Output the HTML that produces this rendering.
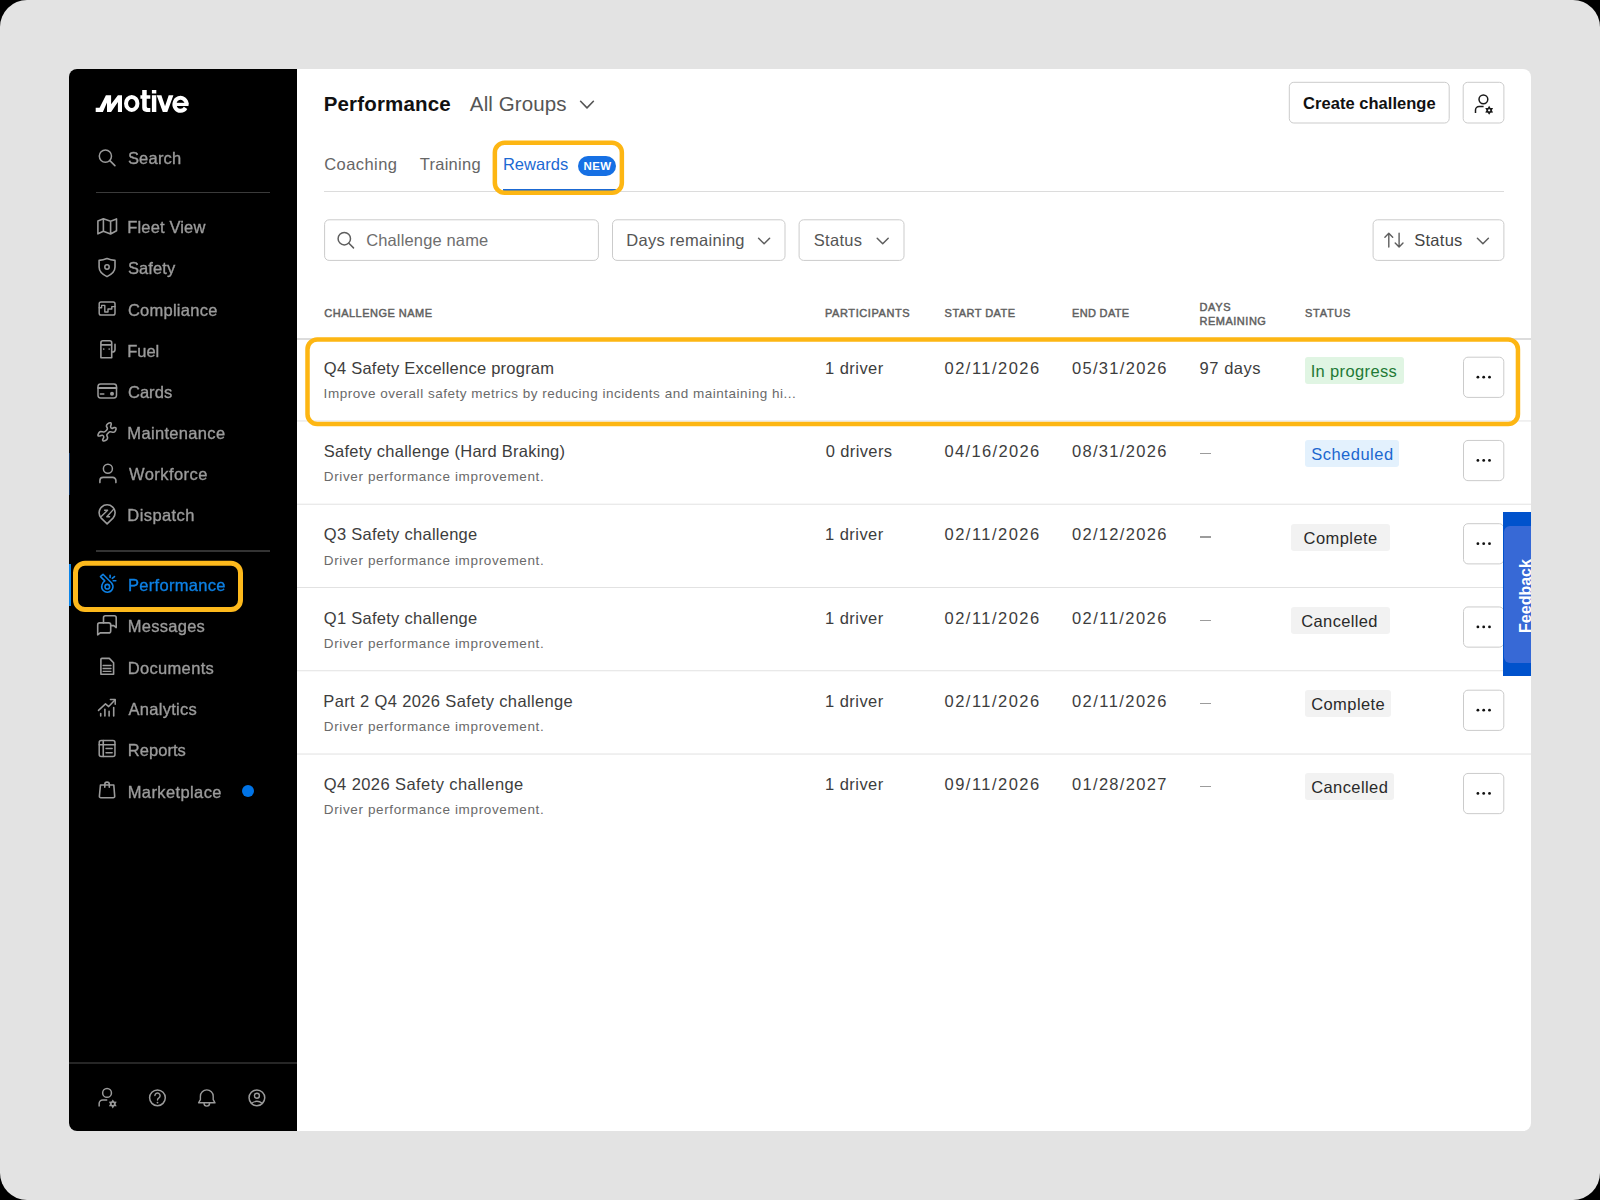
<!DOCTYPE html>
<html><head><meta charset="utf-8"><title>Performance - Rewards</title>
<style>
html,body{margin:0;padding:0;background:#000;}
body{width:1600px;height:1200px;position:relative;overflow:hidden;font-family:"Liberation Sans",sans-serif;}
.frame{position:absolute;left:0;top:0;width:1600px;height:1200px;background:#e3e3e3;border-radius:27px;}
.win{position:absolute;left:69px;top:69px;width:1462px;height:1062px;background:#fff;border-radius:8px;overflow:hidden;}
.side{position:absolute;left:69px;top:69px;width:228px;height:1062px;background:#000;border-radius:8px 0 0 8px;}
.t{position:absolute;white-space:nowrap;line-height:1;font-family:"Liberation Sans",sans-serif;}
.hl{position:absolute;left:297px;width:1234px;height:1px;background:#e4e4e4;}
.btn{position:absolute;box-sizing:border-box;border:1px solid #c9c9c9;border-radius:5px;background:#fff;}
.bd{position:absolute;border-radius:3px;}
.dot{position:absolute;width:2.4px;height:2.4px;border-radius:50%;background:#111;}
.hi{position:absolute;box-sizing:border-box;border:4px solid #fdb613;border-radius:12px;}
.sdiv{position:absolute;background:#333;}
svg{position:absolute;left:0;top:0;overflow:visible;}
</style></head><body>
<div class="frame"></div>
<div class="win"></div>
<div class="side"></div>
<!-- sidebar dividers -->
<div class="sdiv" style="left:96px;top:192px;width:174px;height:1px;background:#3a3a3a"></div>
<div class="sdiv" style="left:96px;top:550px;width:174px;height:2px;background:#333"></div>
<div class="sdiv" style="left:69px;top:1062px;width:228px;height:2px;background:#262626"></div>
<div style="position:absolute;left:69px;top:564px;width:2px;height:42px;background:#0a84e8"></div>
<div style="position:absolute;left:69px;top:453px;width:1px;height:42px;background:#0a2f5e"></div>
<div style="position:absolute;left:242px;top:785.3px;width:12px;height:12px;border-radius:50%;background:#0073e6"></div>
<!-- logo -->
<svg width="1600" height="1200" viewBox="0 0 1600 1200">
<path fill="#fff" d="M95.7 112 V107.8 H99.6 L105.9 95.2 H111.1 V104.2 L117.9 95.2 H122 V112 H117.9 V101.9 L111.1 112 H107 V102.4 L102.9 112 Z"/>
<ellipse cx="131.75" cy="103.45" rx="5.7" ry="6.45" fill="none" stroke="#fff" stroke-width="4"/>
<path fill="#fff" d="M142.2 90 H146.7 V95.2 H150.3 V98.8 H146.7 V106.4 Q146.7 108.1 148.4 108.1 H150.3 V111.9 H146.6 Q142.2 111.9 142.2 107.5 V98.8 H140.4 V95.2 H142.2 Z"/>
<path fill="#fff" d="M151.9 90 H156.3 V93.6 H151.9 Z M151.9 95.2 H156.3 V111.9 H151.9 Z"/>
<path fill="#fff" d="M156.7 95.2 H161.4 L165.05 106.3 L168.7 95.2 H173.4 L167.3 111.9 H162.8 Z"/>
<path fill="none" stroke="#fff" stroke-width="4" d="M186.6 104.4 A6.1 6.5 0 1 0 185.6 107.9"/>
<path fill="none" stroke="#fff" stroke-width="3.2" d="M174.6 104.4 H188.5"/>
<circle cx="105.4" cy="156.1" r="6.1" fill="none" stroke="#9b9b9b" stroke-width="1.5"/>
<path d="M109.9 160.6 L114.9 165.6" fill="none" stroke="#9b9b9b" stroke-width="1.6" stroke-linecap="round" stroke-linejoin="round" />
<path d="M97.9 221 L103.4 218.8 L110.6 221.2 L116.5 218.9 V230.8 L110.6 234 L103.4 231.2 L97.9 233.8 Z M103.4 218.8 V231.2 M110.6 221.2 V234" fill="none" stroke="#9b9b9b" stroke-width="1.6" stroke-linecap="round" stroke-linejoin="round" />
<path d="M99.1 260.4 Q103.2 260.3 107 258.6 Q110.8 260.3 115 260.4 V267 C115 271.6 111.6 274.4 107 276.6 C102.4 274.4 99.1 271.6 99.1 267 Z" fill="none" stroke="#9b9b9b" stroke-width="1.6" stroke-linecap="round" stroke-linejoin="round" />
<circle cx="107" cy="267" r="2.2" fill="none" stroke="#9b9b9b" stroke-width="1.5"/>
<rect x="99.2" y="302" width="15.8" height="13" rx="1.8" fill="none" stroke="#9b9b9b" stroke-width="1.5"/>
<path d="M99.2 307.8 H101.6 V305.4 H104.8 V312 H108 V309 H111.8 V306.6 H115" fill="none" stroke="#9b9b9b" stroke-width="1.4" stroke-linecap="round" stroke-linejoin="round" />
<path d="M100.9 357.8 V342.7 a2 2 0 0 1 2 -2 H109.7 a2 2 0 0 1 2 2 V357.8 Z M100.9 344.9 H111.7" fill="none" stroke="#9b9b9b" stroke-width="1.6" stroke-linecap="round" stroke-linejoin="round" />
<path d="M111.7 352 H112.4 a2.6 2.6 0 0 0 2.6 -2.6 V344.4" fill="none" stroke="#9b9b9b" stroke-width="1.6" stroke-linecap="round" stroke-linejoin="round" />
<circle cx="103.7" cy="349" r="0.85" fill="#9b9b9b"/><circle cx="109.2" cy="349" r="0.85" fill="#9b9b9b"/>
<rect x="98" y="383.9" width="18.5" height="14" rx="2.6" fill="none" stroke="#9b9b9b" stroke-width="1.5"/>
<path d="M98 388 H116.5" fill="none" stroke="#9b9b9b" stroke-width="1.8" stroke-linecap="round" stroke-linejoin="round" />
<path d="M100.4 393.9 H103.8" fill="none" stroke="#9b9b9b" stroke-width="1.5" stroke-linecap="round" stroke-linejoin="round" />
<circle cx="112" cy="393.8" r="2" fill="#9b9b9b"/>
<path d="M110.80 422.80 C110.20 422.70 108.33 423.27 107.60 423.80 C106.87 424.33 106.43 425.20 106.40 426.00 C106.37 426.80 107.47 427.80 107.40 428.60 C107.33 429.40 106.57 430.23 106.00 430.80 C105.43 431.37 104.90 431.87 104.00 432.00 C103.10 432.13 101.47 431.43 100.60 431.60 C99.73 431.77 99.23 432.33 98.80 433.00 C98.37 433.67 97.80 435.10 98.00 435.60 C98.20 436.10 99.27 436.07 100.00 436.00 C100.73 435.93 101.77 435.03 102.40 435.20 C103.03 435.37 103.77 436.20 103.80 437.00 C103.83 437.80 102.57 439.33 102.60 440.00 C102.63 440.67 103.30 441.07 104.00 441.00 C104.70 440.93 106.20 440.17 106.80 439.60 C107.40 439.03 107.60 438.40 107.60 437.60 C107.60 436.80 106.67 435.60 106.80 434.80 C106.93 434.00 107.87 433.30 108.40 432.80 C108.93 432.30 109.13 431.90 110.00 431.80 C110.87 431.70 112.70 432.37 113.60 432.20 C114.50 432.03 115.00 431.50 115.40 430.80 C115.80 430.10 116.23 428.53 116.00 428.00 C115.77 427.47 114.67 427.53 114.00 427.60 C113.33 427.67 112.57 428.53 112.00 428.40 C111.43 428.27 110.73 427.47 110.60 426.80 C110.47 426.13 111.17 425.07 111.20 424.40 C111.23 423.73 111.40 422.90 110.80 422.80Z" fill="none" stroke="#9b9b9b" stroke-width="1.6" stroke-linecap="round" stroke-linejoin="round" />
<circle cx="107.9" cy="468.7" r="4.5" fill="none" stroke="#9b9b9b" stroke-width="1.5"/>
<path d="M99.9 482.6 V480.6 a3.2 3.2 0 0 1 3.2 -3.2 H112.7 a3.2 3.2 0 0 1 3.2 3.2 V482.6" fill="none" stroke="#9b9b9b" stroke-width="1.6" stroke-linecap="round" stroke-linejoin="round" />
<path d="M107.1 523.8 L101.2 518.2 A8 8 0 1 1 113 518.2 Z" fill="none" stroke="#9b9b9b" stroke-width="1.6" stroke-linecap="round" stroke-linejoin="round" />
<path d="M101.5 516.3 L107.6 510.3 H104.6 M113.5 509.4 L106.8 516.7 H109.6" fill="none" stroke="#9b9b9b" stroke-width="1.4" stroke-linecap="round" stroke-linejoin="round" />
<path d="M103 574.3 L111.6 583 A5.6 5.6 0 1 1 101.9 585.2 C102.2 583.5 103.2 582 104.8 580.9 L100.5 576.6 Z" fill="none" stroke="#0d80e4" stroke-width="1.6" stroke-linecap="round" stroke-linejoin="round" />
<circle cx="107.3" cy="586.7" r="2.3" fill="none" stroke="#0d80e4" stroke-width="1.6"/>
<path d="M110.1 575.3 V577.4 M112.3 578.3 L114.5 576.6 M113.2 580.8 H115.8" fill="none" stroke="#0d80e4" stroke-width="1.6" stroke-linecap="round" stroke-linejoin="round" />
<path d="M103.5 622.9 V617.8 a2 2 0 0 1 2 -2 H114.2 a2 2 0 0 1 2 2 V627.6 L113.8 625.6 H110.7" fill="none" stroke="#9b9b9b" stroke-width="1.6" stroke-linecap="round" stroke-linejoin="round" />
<path d="M97.7 634.8 V624.9 a2 2 0 0 1 2 -2 H108.7 a2 2 0 0 1 2 2 V630.9 a2 2 0 0 1 -2 2 H100.2 Z" fill="none" stroke="#9b9b9b" stroke-width="1.6" stroke-linecap="round" stroke-linejoin="round" />
<path d="M100.9 674.3 V659.4 a1 1 0 0 1 1 -1 H109.3 L113.6 662.7 V674.3 Z" fill="none" stroke="#9b9b9b" stroke-width="1.6" stroke-linecap="round" stroke-linejoin="round" />
<path d="M103.1 665.5 H111 M103.1 668.5 H111 M103.1 671.3 H111" fill="none" stroke="#9b9b9b" stroke-width="1.3" stroke-linecap="round" stroke-linejoin="round" />
<path d="M98.5 710.4 L105.5 703.9 L108.7 706.6 L114.9 700" fill="none" stroke="#9b9b9b" stroke-width="1.5" stroke-linecap="round" stroke-linejoin="round" />
<path d="M110.4 699.6 H115.2 V704.2" fill="none" stroke="#9b9b9b" stroke-width="1.5" stroke-linecap="round" stroke-linejoin="round" />
<path d="M100.7 713.6 V716 M104.9 709.2 V716 M109.1 711.2 V716 M113.7 707.6 V716" fill="none" stroke="#9b9b9b" stroke-width="1.6" stroke-linecap="round" stroke-linejoin="round" />
<rect x="99.2" y="740.6" width="15.75" height="15.8" rx="2" fill="none" stroke="#9b9b9b" stroke-width="1.5"/>
<path d="M103.25 740.6 V756.4 M99.2 744.7 H114.95" fill="none" stroke="#9b9b9b" stroke-width="1.6" stroke-linecap="round" stroke-linejoin="round" />
<path d="M106 748.5 H112.2 M106 752.7 H112.2" fill="none" stroke="#9b9b9b" stroke-width="1.4" stroke-linecap="round" stroke-linejoin="round" />
<path d="M100.45 785 H113.8 L114.7 796.2 a1.4 1.4 0 0 1 -1.4 1.5 H100.8 a1.4 1.4 0 0 1 -1.4 -1.5 Z" fill="none" stroke="#9b9b9b" stroke-width="1.6" stroke-linecap="round" stroke-linejoin="round" />
<path d="M104.8 787.2 V784.4 a2.25 2.25 0 0 1 4.5 0 V787.2" fill="none" stroke="#9b9b9b" stroke-width="1.6" stroke-linecap="round" stroke-linejoin="round" />
<circle cx="107.05" cy="1092.90" r="4.4" fill="none" stroke="#9b9b9b" stroke-width="1.5"/><path d="M99.15 1106.50 V1103.60 a3.6 3.6 0 0 1 3.6 -3.6 H107.25" fill="none" stroke="#9b9b9b" stroke-width="1.5"/><path d="M112.80 1099.40 L114.15 1101.56 L116.70 1101.65 L115.50 1103.90 L116.70 1106.15 L114.15 1106.24 L112.80 1108.40 L111.45 1106.24 L108.90 1106.15 L110.10 1103.90 L108.90 1101.65 L111.45 1101.56Z M111.65 1103.90 a1.15 1.15 0 1 0 2.3 0 a1.15 1.15 0 1 0 -2.3 0Z" fill="#9b9b9b" fill-rule="evenodd" stroke="none"/>
<circle cx="157.45" cy="1097.85" r="7.85" fill="none" stroke="#9b9b9b" stroke-width="1.5"/>
<path d="M154.9 1095.6 a2.6 2.6 0 1 1 4 2.2 c-1 0.6 -1.4 1.1 -1.4 2.2" fill="none" stroke="#9b9b9b" stroke-width="1.4" stroke-linecap="round" stroke-linejoin="round" />
<circle cx="157.5" cy="1102.6" r="0.9" fill="#9b9b9b"/>
<path d="M198.6 1102.8 L200.4 1099.6 V1096.3 a6.4 6.4 0 0 1 12.8 0 V1099.6 L215 1102.8 Z M204 1103.3 a2.8 2.8 0 0 0 5.6 0" fill="none" stroke="#9b9b9b" stroke-width="1.4" stroke-linecap="round" stroke-linejoin="round" />
<circle cx="256.9" cy="1097.85" r="7.85" fill="none" stroke="#9b9b9b" stroke-width="1.5"/>
<circle cx="256.9" cy="1095.7" r="2.5" fill="none" stroke="#9b9b9b" stroke-width="1.4"/>
<path d="M251.5 1103.2 Q256.9 1099.4 262.3 1103.2" fill="none" stroke="#9b9b9b" stroke-width="1.4" stroke-linecap="round" stroke-linejoin="round" />
</svg>
<!-- main chrome -->
<div style="position:absolute;left:324px;top:191px;width:1180px;height:1px;background:#dcdcdc"></div>
<div style="position:absolute;left:503px;top:189px;width:113px;height:2.5px;background:#1b69d3"></div>
<div style="position:absolute;left:577.6px;top:155.6px;width:38.6px;height:20px;border-radius:10px;background:#1670e4"></div>
<div class="hl" style="top:338px;height:2px;background:#dcdcdc"></div>
<svg width="1600" height="1200" viewBox="0 0 1600 1200">
<rect x="297" y="420.45" width="1234" height="1" fill="#e2e2e2"/>
<rect x="297" y="503.72" width="1234" height="1" fill="#e2e2e2"/>
<rect x="297" y="586.99" width="1234" height="1" fill="#e2e2e2"/>
<rect x="297" y="670.26" width="1234" height="1" fill="#e2e2e2"/>
<rect x="297" y="753.53" width="1234" height="1" fill="#e2e2e2"/>
</svg>
<div class="bd" style="left:1305.0px;top:357.0px;width:99.0px;height:27px;background:#e0f5e3"></div>
<div class="bd" style="left:1305.0px;top:440.2px;width:94.0px;height:27px;background:#e3f1fd"></div>
<div class="bd" style="left:1291.3px;top:523.5px;width:99.2px;height:27px;background:#f2f2f2"></div>
<div class="bd" style="left:1291.3px;top:606.8px;width:99.2px;height:27px;background:#f2f2f2"></div>
<div class="bd" style="left:1305.0px;top:690.0px;width:85.5px;height:27px;background:#f2f2f2"></div>
<div class="bd" style="left:1305.0px;top:773.2px;width:88.5px;height:27px;background:#f2f2f2"></div>
<div style="position:absolute;left:1200px;top:453.1px;width:11px;height:1.4px;background:#9c9c9c"></div>
<div style="position:absolute;left:1200px;top:536.3px;width:11px;height:1.4px;background:#9c9c9c"></div>
<div style="position:absolute;left:1200px;top:619.5px;width:11px;height:1.4px;background:#9c9c9c"></div>
<div style="position:absolute;left:1200px;top:702.8px;width:11px;height:1.4px;background:#9c9c9c"></div>
<div style="position:absolute;left:1200px;top:786.0px;width:11px;height:1.4px;background:#9c9c9c"></div>
<svg width="1600" height="1200" viewBox="0 0 1600 1200">
<rect x="1289.30" y="82.30" width="159.90" height="40.70" rx="4.5" fill="#fff" stroke="#cbcbcb" stroke-width="1"/>
<rect x="1463.20" y="82.30" width="40.70" height="40.70" rx="4.5" fill="#fff" stroke="#cbcbcb" stroke-width="1"/>
<rect x="324.60" y="219.80" width="273.80" height="40.60" rx="4.5" fill="#fff" stroke="#cbcbcb" stroke-width="1"/>
<rect x="612.50" y="219.80" width="172.50" height="40.60" rx="4.5" fill="#fff" stroke="#cbcbcb" stroke-width="1"/>
<rect x="799.10" y="219.80" width="104.90" height="40.60" rx="4.5" fill="#fff" stroke="#cbcbcb" stroke-width="1"/>
<rect x="1373.10" y="219.80" width="130.80" height="40.60" rx="4.5" fill="#fff" stroke="#cbcbcb" stroke-width="1"/>
<rect x="1463.50" y="357.20" width="40.30" height="40.20" rx="4.5" fill="#fff" stroke="#cbcbcb" stroke-width="1"/>
<rect x="1463.50" y="440.45" width="40.30" height="40.20" rx="4.5" fill="#fff" stroke="#cbcbcb" stroke-width="1"/>
<rect x="1463.50" y="523.70" width="40.30" height="40.20" rx="4.5" fill="#fff" stroke="#cbcbcb" stroke-width="1"/>
<rect x="1463.50" y="606.95" width="40.30" height="40.20" rx="4.5" fill="#fff" stroke="#cbcbcb" stroke-width="1"/>
<rect x="1463.50" y="690.20" width="40.30" height="40.20" rx="4.5" fill="#fff" stroke="#cbcbcb" stroke-width="1"/>
<rect x="1463.50" y="773.45" width="40.30" height="40.20" rx="4.5" fill="#fff" stroke="#cbcbcb" stroke-width="1"/>
<path d="M580.6 101.3 L587 107.9 L593.4 101.3" fill="none" stroke="#555" stroke-width="1.6" stroke-linecap="round" stroke-linejoin="round"/>
<circle cx="344.3" cy="238.7" r="6.2" fill="none" stroke="#5e5e5e" stroke-width="1.5"/>
<path d="M348.9 243.3 L353.5 247.9" fill="none" stroke="#5e5e5e" stroke-width="1.5" stroke-linecap="round" stroke-linejoin="round"/>
<path d="M758.6 238.2 L764.1 243.8 L769.6 238.2" fill="none" stroke="#5e5e5e" stroke-width="1.5" stroke-linecap="round" stroke-linejoin="round"/>
<path d="M877.2 238.2 L882.7 243.8 L888.2 238.2" fill="none" stroke="#5e5e5e" stroke-width="1.5" stroke-linecap="round" stroke-linejoin="round"/>
<path d="M1477.4 238.2 L1482.9 243.8 L1488.4 238.2" fill="none" stroke="#5e5e5e" stroke-width="1.5" stroke-linecap="round" stroke-linejoin="round"/>
<path d="M1388.8 247 V233.4 M1384.9 237.3 L1388.8 233.3 L1392.7 237.3" fill="none" stroke="#5e5e5e" stroke-width="1.4" stroke-linecap="round" stroke-linejoin="round"/>
<path d="M1399.1 233.3 V246.9 M1395.2 243 L1399.1 247 L1403 243" fill="none" stroke="#5e5e5e" stroke-width="1.4" stroke-linecap="round" stroke-linejoin="round"/>
<circle cx="1477.90" cy="377.20" r="1.4" fill="#111"/>
<circle cx="1483.70" cy="377.20" r="1.4" fill="#111"/>
<circle cx="1489.50" cy="377.20" r="1.4" fill="#111"/>
<circle cx="1477.90" cy="460.45" r="1.4" fill="#111"/>
<circle cx="1483.70" cy="460.45" r="1.4" fill="#111"/>
<circle cx="1489.50" cy="460.45" r="1.4" fill="#111"/>
<circle cx="1477.90" cy="543.70" r="1.4" fill="#111"/>
<circle cx="1483.70" cy="543.70" r="1.4" fill="#111"/>
<circle cx="1489.50" cy="543.70" r="1.4" fill="#111"/>
<circle cx="1477.90" cy="626.95" r="1.4" fill="#111"/>
<circle cx="1483.70" cy="626.95" r="1.4" fill="#111"/>
<circle cx="1489.50" cy="626.95" r="1.4" fill="#111"/>
<circle cx="1477.90" cy="710.20" r="1.4" fill="#111"/>
<circle cx="1483.70" cy="710.20" r="1.4" fill="#111"/>
<circle cx="1489.50" cy="710.20" r="1.4" fill="#111"/>
<circle cx="1477.90" cy="793.45" r="1.4" fill="#111"/>
<circle cx="1483.70" cy="793.45" r="1.4" fill="#111"/>
<circle cx="1489.50" cy="793.45" r="1.4" fill="#111"/>
<circle cx="1483.40" cy="99.30" r="4.4" fill="none" stroke="#1a1a1a" stroke-width="1.5"/><path d="M1475.50 112.90 V110.00 a3.6 3.6 0 0 1 3.6 -3.6 H1483.60" fill="none" stroke="#1a1a1a" stroke-width="1.5"/><path d="M1489.15 105.80 L1490.50 107.96 L1493.05 108.05 L1491.85 110.30 L1493.05 112.55 L1490.50 112.64 L1489.15 114.80 L1487.80 112.64 L1485.25 112.55 L1486.45 110.30 L1485.25 108.05 L1487.80 107.96Z M1488.00 110.30 a1.15 1.15 0 1 0 2.3 0 a1.15 1.15 0 1 0 -2.3 0Z" fill="#1a1a1a" fill-rule="evenodd" stroke="none"/>
</svg>
<div style="position:absolute;left:0;top:0;width:300px;height:1200px;will-change:transform">
<div id="n_search" class="t" style="left:127.91px;top:150.00px;font-size:16.5px;font-weight:400;color:#9b9b9b;letter-spacing:0.208px;-webkit-text-stroke:0.35px #9b9b9b;">Search</div>
<div id="n_a0" class="t" style="left:127.35px;top:219.01px;font-size:16.5px;font-weight:400;color:#9b9b9b;letter-spacing:0.139px;-webkit-text-stroke:0.35px #9b9b9b;">Fleet View</div>
<div id="n_a1" class="t" style="left:127.91px;top:260.00px;font-size:16.5px;font-weight:400;color:#9b9b9b;letter-spacing:0.121px;-webkit-text-stroke:0.35px #9b9b9b;">Safety</div>
<div id="n_a2" class="t" style="left:127.91px;top:302.00px;font-size:16.5px;font-weight:400;color:#9b9b9b;letter-spacing:0.253px;-webkit-text-stroke:0.35px #9b9b9b;">Compliance</div>
<div id="n_a3" class="t" style="left:127.35px;top:343.01px;font-size:16.5px;font-weight:400;color:#9b9b9b;letter-spacing:-0.054px;-webkit-text-stroke:0.35px #9b9b9b;">Fuel</div>
<div id="n_a4" class="t" style="left:127.91px;top:384.00px;font-size:16.5px;font-weight:400;color:#9b9b9b;letter-spacing:0.059px;-webkit-text-stroke:0.35px #9b9b9b;">Cards</div>
<div id="n_a5" class="t" style="left:127.35px;top:425.00px;font-size:16.5px;font-weight:400;color:#9b9b9b;letter-spacing:0.328px;-webkit-text-stroke:0.35px #9b9b9b;">Maintenance</div>
<div id="n_a6" class="t" style="left:129.00px;top:466.01px;font-size:16.5px;font-weight:400;color:#9b9b9b;letter-spacing:0.432px;-webkit-text-stroke:0.35px #9b9b9b;">Workforce</div>
<div id="n_a7" class="t" style="left:127.35px;top:507.00px;font-size:16.5px;font-weight:400;color:#9b9b9b;letter-spacing:0.409px;-webkit-text-stroke:0.35px #9b9b9b;">Dispatch</div>
<div id="n_perf" class="t" style="left:127.98px;top:577.00px;font-size:16.5px;font-weight:400;color:#0d80e4;letter-spacing:0.305px;-webkit-text-stroke:0.35px #0d80e4;">Performance</div>
<div id="n_b0" class="t" style="left:127.73px;top:618.00px;font-size:16.5px;font-weight:400;color:#9b9b9b;letter-spacing:0.274px;-webkit-text-stroke:0.35px #9b9b9b;">Messages</div>
<div id="n_b1" class="t" style="left:127.73px;top:660.00px;font-size:16.5px;font-weight:400;color:#9b9b9b;letter-spacing:0.328px;-webkit-text-stroke:0.35px #9b9b9b;">Documents</div>
<div id="n_b2" class="t" style="left:128.59px;top:701.00px;font-size:16.5px;font-weight:400;color:#9b9b9b;letter-spacing:0.271px;-webkit-text-stroke:0.35px #9b9b9b;">Analytics</div>
<div id="n_b3" class="t" style="left:127.73px;top:742.00px;font-size:16.5px;font-weight:400;color:#9b9b9b;letter-spacing:0.053px;-webkit-text-stroke:0.35px #9b9b9b;">Reports</div>
<div id="n_b4" class="t" style="left:127.73px;top:784.00px;font-size:16.5px;font-weight:400;color:#9b9b9b;letter-spacing:0.387px;-webkit-text-stroke:0.35px #9b9b9b;">Marketplace</div>
</div>
<div id="h_title" class="t" style="left:323.70px;top:94.01px;font-size:20.5px;font-weight:700;color:#111;letter-spacing:0.172px;">Performance</div>
<div id="h_groups" class="t" style="left:469.85px;top:94.01px;font-size:20.5px;font-weight:400;color:#555;letter-spacing:0.119px;">All Groups</div>
<div id="b_create" class="t" style="left:1303.10px;top:95.01px;font-size:16.5px;font-weight:700;color:#111;letter-spacing:0.031px;">Create challenge</div>
<div id="tab_c" class="t" style="left:324.14px;top:156.00px;font-size:16.5px;font-weight:400;color:#666;letter-spacing:0.458px;">Coaching</div>
<div id="tab_t" class="t" style="left:419.69px;top:156.00px;font-size:16.5px;font-weight:400;color:#666;letter-spacing:0.277px;">Training</div>
<div id="tab_r" class="t" style="left:502.90px;top:156.00px;font-size:16.5px;font-weight:400;color:#1b69d3;letter-spacing:0.061px;">Rewards</div>
<div id="new" class="t" style="left:583.40px;top:160.57px;font-size:11.5px;font-weight:700;color:#fff;letter-spacing:0.450px;">NEW</div>
<div id="f_ph" class="t" style="left:366.14px;top:232.00px;font-size:16.5px;font-weight:400;color:#6e6e6e;letter-spacing:0.151px;">Challenge name</div>
<div id="f_days" class="t" style="left:626.27px;top:232.00px;font-size:16.5px;font-weight:400;color:#555;letter-spacing:0.280px;">Days remaining</div>
<div id="f_status" class="t" style="left:813.67px;top:232.00px;font-size:16.5px;font-weight:400;color:#555;letter-spacing:0.333px;">Status</div>
<div id="f_sort" class="t" style="left:1414.26px;top:232.00px;font-size:16.5px;font-weight:400;color:#444;letter-spacing:0.259px;">Status</div>
<div id="th_name" class="t" style="left:324.32px;top:308.01px;font-size:11px;font-weight:400;color:#606060;letter-spacing:0.485px;-webkit-text-stroke:0.45px #606060;">CHALLENGE NAME</div>
<div id="th_part" class="t" style="left:825.00px;top:308.01px;font-size:11px;font-weight:400;color:#606060;letter-spacing:0.587px;-webkit-text-stroke:0.45px #606060;">PARTICIPANTS</div>
<div id="th_start" class="t" style="left:944.60px;top:308.01px;font-size:11px;font-weight:400;color:#606060;letter-spacing:0.448px;-webkit-text-stroke:0.45px #606060;">START DATE</div>
<div id="th_end" class="t" style="left:1071.98px;top:308.01px;font-size:11px;font-weight:400;color:#606060;letter-spacing:0.339px;-webkit-text-stroke:0.45px #606060;">END DATE</div>
<div id="th_days" class="t" style="left:1199.47px;top:302.00px;font-size:11px;font-weight:400;color:#606060;letter-spacing:0.668px;-webkit-text-stroke:0.45px #606060;">DAYS</div>
<div id="th_rem" class="t" style="left:1199.47px;top:316.01px;font-size:11px;font-weight:400;color:#606060;letter-spacing:0.513px;-webkit-text-stroke:0.45px #606060;">REMAINING</div>
<div id="th_status" class="t" style="left:1305.08px;top:308.01px;font-size:11px;font-weight:400;color:#606060;letter-spacing:0.702px;-webkit-text-stroke:0.45px #606060;">STATUS</div>
<div id="r0_t" class="t" style="left:323.87px;top:360.00px;font-size:16.5px;font-weight:400;color:#3d3d3d;letter-spacing:0.237px;">Q4 Safety Excellence program</div>
<div id="r0_d" class="t" style="left:323.61px;top:387.01px;font-size:13.5px;font-weight:400;color:#6a6a6a;letter-spacing:0.517px;">Improve overall safety metrics by reducing incidents and maintaining hi...</div>
<div id="r0_p" class="t" style="left:825.10px;top:360.00px;font-size:16.5px;font-weight:400;color:#3d3d3d;letter-spacing:0.446px;">1 driver</div>
<div id="r0_s" class="t" style="left:944.55px;top:360.00px;font-size:16.5px;font-weight:400;color:#3d3d3d;letter-spacing:1.467px;">02/11/2026</div>
<div id="r0_e" class="t" style="left:1072.00px;top:360.00px;font-size:16.5px;font-weight:400;color:#3d3d3d;letter-spacing:1.312px;">05/31/2026</div>
<div id="r0_n" class="t" style="left:1199.58px;top:360.00px;font-size:16.5px;font-weight:400;color:#3d3d3d;letter-spacing:0.540px;">97 days</div>
<div id="r1_t" class="t" style="left:323.75px;top:443.00px;font-size:16.5px;font-weight:400;color:#3d3d3d;letter-spacing:0.247px;">Safety challenge (Hard Braking)</div>
<div id="r1_d" class="t" style="left:323.80px;top:470.01px;font-size:13.5px;font-weight:400;color:#6a6a6a;letter-spacing:0.627px;">Driver performance improvement.</div>
<div id="r1_p" class="t" style="left:825.81px;top:443.00px;font-size:16.5px;font-weight:400;color:#3d3d3d;letter-spacing:0.370px;">0 drivers</div>
<div id="r1_s" class="t" style="left:944.55px;top:443.00px;font-size:16.5px;font-weight:400;color:#3d3d3d;letter-spacing:1.333px;">04/16/2026</div>
<div id="r1_e" class="t" style="left:1072.00px;top:443.00px;font-size:16.5px;font-weight:400;color:#3d3d3d;letter-spacing:1.312px;">08/31/2026</div>
<div id="r2_t" class="t" style="left:323.87px;top:526.00px;font-size:16.5px;font-weight:400;color:#3d3d3d;letter-spacing:0.266px;">Q3 Safety challenge</div>
<div id="r2_d" class="t" style="left:323.80px;top:554.01px;font-size:13.5px;font-weight:400;color:#6a6a6a;letter-spacing:0.627px;">Driver performance improvement.</div>
<div id="r2_p" class="t" style="left:825.10px;top:526.00px;font-size:16.5px;font-weight:400;color:#3d3d3d;letter-spacing:0.446px;">1 driver</div>
<div id="r2_s" class="t" style="left:944.55px;top:526.00px;font-size:16.5px;font-weight:400;color:#3d3d3d;letter-spacing:1.467px;">02/11/2026</div>
<div id="r2_e" class="t" style="left:1072.00px;top:526.00px;font-size:16.5px;font-weight:400;color:#3d3d3d;letter-spacing:1.312px;">02/12/2026</div>
<div id="r3_t" class="t" style="left:323.87px;top:610.00px;font-size:16.5px;font-weight:400;color:#3d3d3d;letter-spacing:0.266px;">Q1 Safety challenge</div>
<div id="r3_d" class="t" style="left:323.80px;top:637.01px;font-size:13.5px;font-weight:400;color:#6a6a6a;letter-spacing:0.627px;">Driver performance improvement.</div>
<div id="r3_p" class="t" style="left:825.10px;top:610.00px;font-size:16.5px;font-weight:400;color:#3d3d3d;letter-spacing:0.446px;">1 driver</div>
<div id="r3_s" class="t" style="left:944.55px;top:610.00px;font-size:16.5px;font-weight:400;color:#3d3d3d;letter-spacing:1.467px;">02/11/2026</div>
<div id="r3_e" class="t" style="left:1072.00px;top:610.00px;font-size:16.5px;font-weight:400;color:#3d3d3d;letter-spacing:1.444px;">02/11/2026</div>
<div id="r4_t" class="t" style="left:323.31px;top:693.00px;font-size:16.5px;font-weight:400;color:#3d3d3d;letter-spacing:0.367px;">Part 2 Q4 2026 Safety challenge</div>
<div id="r4_d" class="t" style="left:323.80px;top:720.01px;font-size:13.5px;font-weight:400;color:#6a6a6a;letter-spacing:0.627px;">Driver performance improvement.</div>
<div id="r4_p" class="t" style="left:825.10px;top:693.00px;font-size:16.5px;font-weight:400;color:#3d3d3d;letter-spacing:0.446px;">1 driver</div>
<div id="r4_s" class="t" style="left:944.55px;top:693.00px;font-size:16.5px;font-weight:400;color:#3d3d3d;letter-spacing:1.467px;">02/11/2026</div>
<div id="r4_e" class="t" style="left:1072.00px;top:693.00px;font-size:16.5px;font-weight:400;color:#3d3d3d;letter-spacing:1.444px;">02/11/2026</div>
<div id="r5_t" class="t" style="left:323.87px;top:776.00px;font-size:16.5px;font-weight:400;color:#3d3d3d;letter-spacing:0.413px;">Q4 2026 Safety challenge</div>
<div id="r5_d" class="t" style="left:323.80px;top:803.01px;font-size:13.5px;font-weight:400;color:#6a6a6a;letter-spacing:0.627px;">Driver performance improvement.</div>
<div id="r5_p" class="t" style="left:825.10px;top:776.00px;font-size:16.5px;font-weight:400;color:#3d3d3d;letter-spacing:0.446px;">1 driver</div>
<div id="r5_s" class="t" style="left:944.55px;top:776.00px;font-size:16.5px;font-weight:400;color:#3d3d3d;letter-spacing:1.467px;">09/11/2026</div>
<div id="r5_e" class="t" style="left:1072.00px;top:776.00px;font-size:16.5px;font-weight:400;color:#3d3d3d;letter-spacing:1.314px;">01/28/2027</div>
<div id="bd0" class="t" style="left:1310.65px;top:363.00px;font-size:16.5px;font-weight:400;color:#1f7a36;letter-spacing:0.361px;">In progress</div>
<div id="bd1" class="t" style="left:1311.19px;top:446.00px;font-size:16.5px;font-weight:400;color:#1b67cf;letter-spacing:0.493px;">Scheduled</div>
<div id="bd2" class="t" style="left:1303.55px;top:530.00px;font-size:16.5px;font-weight:400;color:#2a2a2a;letter-spacing:0.443px;">Complete</div>
<div id="bd3" class="t" style="left:1301.33px;top:613.00px;font-size:16.5px;font-weight:400;color:#2a2a2a;letter-spacing:0.346px;">Cancelled</div>
<div id="bd4" class="t" style="left:1311.17px;top:696.00px;font-size:16.5px;font-weight:400;color:#2a2a2a;letter-spacing:0.429px;">Complete</div>
<div id="bd5" class="t" style="left:1311.17px;top:779.00px;font-size:16.5px;font-weight:400;color:#2a2a2a;letter-spacing:0.410px;">Cancelled</div>
<!-- highlights -->
<svg width="1600" height="1200" viewBox="0 0 1600 1200">
<rect x="75.5" y="563.25" width="165" height="46.2" rx="9.5" fill="none" stroke="#fdb91c" stroke-width="5"/>
<rect x="494.85" y="142.85" width="127" height="49.9" rx="9.75" fill="none" stroke="#fdb613" stroke-width="4.5"/>
<rect x="307.5" y="339.5" width="1210.45" height="84.45" rx="9.75" fill="none" stroke="#fdb613" stroke-width="4.5"/>
</svg>
<!-- feedback -->
<div style="position:absolute;left:1503px;top:512px;width:28px;height:164px;background:#0052cc;overflow:hidden">
  <div style="position:absolute;left:1px;top:13.5px;width:40px;height:137px;border-radius:6px;background:#3769d6"></div>
  <div id="fb" style="position:absolute;left:22.5px;top:83.5px;width:0;height:0;">
    <div style="position:absolute;transform:translate(-50%,-50%) rotate(-90deg);white-space:nowrap;font-weight:700;font-size:16px;color:#fff;line-height:1;">Feedback</div>
  </div>
</div>
</body></html>
